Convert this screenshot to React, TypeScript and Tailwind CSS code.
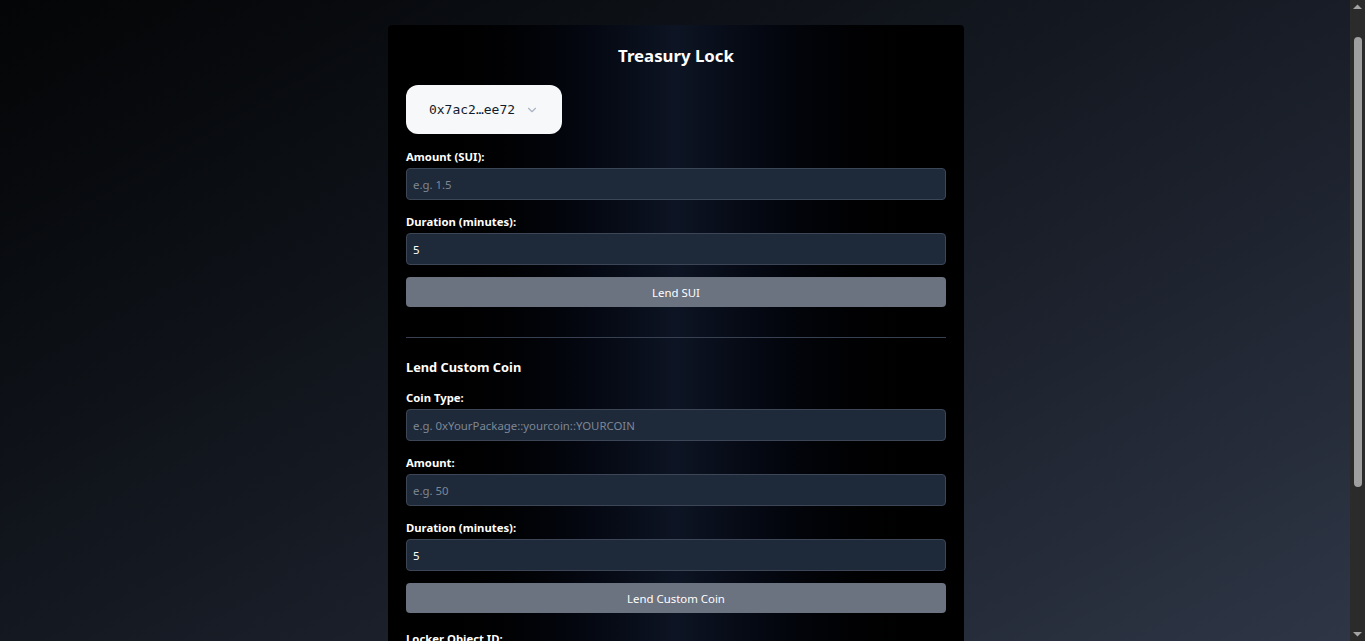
import React from 'react';

const font = { fontFamily: '"Noto Sans", "Open Sans", Arial, sans-serif' };

interface FieldProps {
  label: string;
  placeholder?: string;
  value?: string;
}

const Field: React.FC<FieldProps> = ({ label, placeholder, value }) => (
  <div className="flex flex-col gap-[3px]">
    <label className="text-[11.3px] leading-4 font-bold text-white">{label}</label>
    <input
      className="h-[32px] w-full rounded border border-[#3c4656] bg-[#1e2939] px-[6px] text-[11.4px] text-white placeholder:text-[#7d8796] outline-none"
      placeholder={placeholder}
      defaultValue={value}
      style={font}
    />
  </div>
);

const ActionButton: React.FC<{ children: React.ReactNode }> = ({ children }) => (
  <button
    className="h-[30px] w-full rounded bg-[#6b7280] pt-[2px] text-[11.4px] text-white"
    style={font}
  >
    {children}
  </button>
);

// browser scrollbar strip seen at the right edge of the shot
const ScrollBar = () => (
  <div className="fixed top-0 right-0 flex h-screen w-[15px] flex-col items-center bg-[#2b2b2b]">
    <svg width="9" height="6" viewBox="0 0 9 6" className="mt-[4px]">
      <path d="M0 5 L4.5 0.5 L9 5 Z" fill="#a3a3a3" />
    </svg>
    <div className="mt-[27px] h-[450px] w-[8px] rounded-full bg-[#9f9f9f]" />
    <div className="flex-1" />
    <svg width="9" height="6" viewBox="0 0 9 6" className="mb-[4px]">
      <path d="M0 1 L4.5 5.5 L9 1 Z" fill="#a3a3a3" />
    </svg>
  </div>
);

export default function App() {
  return (
    <div
      className="min-h-screen bg-gradient-to-br from-[#040506] via-[#181d27] to-[#343c4d] pt-[25px] pr-[13px] pb-10"
      style={font}
    >
      <div className="mx-auto w-[576px] rounded bg-gradient-to-r from-black via-[#0d1423] to-black px-[18px] pt-[17px] pb-6">
        <h1 className="text-center text-[16.8px] leading-7 font-bold text-white">Treasury Lock</h1>

        {/* Wallet */}
        <div className="mt-[15px]">
          <button className="flex h-[49px] w-[156px] items-center justify-center gap-[10px] rounded-xl bg-[#f7f8fa] text-[13px] font-medium text-[#111c2c]">
            <span style={{ fontFamily: '"DejaVu Sans Mono", "Liberation Mono", monospace' }}>0x7ac2…ee72</span>
            <svg width="14" height="14" viewBox="0 0 24 24" fill="none" stroke="#a9b4c2" strokeWidth="2" strokeLinecap="round" strokeLinejoin="round">
              <path d="m6 9 6 6 6-6" />
            </svg>
          </button>
        </div>

        <div className="mt-[15px] flex flex-col gap-[14px]">
          <Field label="Amount (SUI):" placeholder="e.g. 1.5" />
          <Field label="Duration (minutes):" value="5" />
        </div>
        <div className="mt-[12px]">
          <ActionButton>Lend SUI</ActionButton>
        </div>

        <hr className="mt-[30px] border-t border-[#374151]" />

        <h2 className="mt-[19px] text-[12.8px] leading-5 font-bold text-white">Lend Custom Coin</h2>
        <div className="mt-[13px] flex flex-col gap-[14px]">
          <Field label="Coin Type:" placeholder="e.g. 0xYourPackage::yourcoin::YOURCOIN" />
          <Field label="Amount:" placeholder="e.g. 50" />
          <Field label="Duration (minutes):" value="5" />
        </div>
        <div className="mt-[12px]">
          <ActionButton>Lend Custom Coin</ActionButton>
        </div>

        <div className="mt-[18px] flex flex-col gap-[14px]">
          <Field label="Locker Object ID:" placeholder="e.g. 0x..." />
        </div>
        <div className="mt-[12px]">
          <ActionButton>Withdraw</ActionButton>
        </div>
      </div>
      <ScrollBar />
    </div>
  );
}
